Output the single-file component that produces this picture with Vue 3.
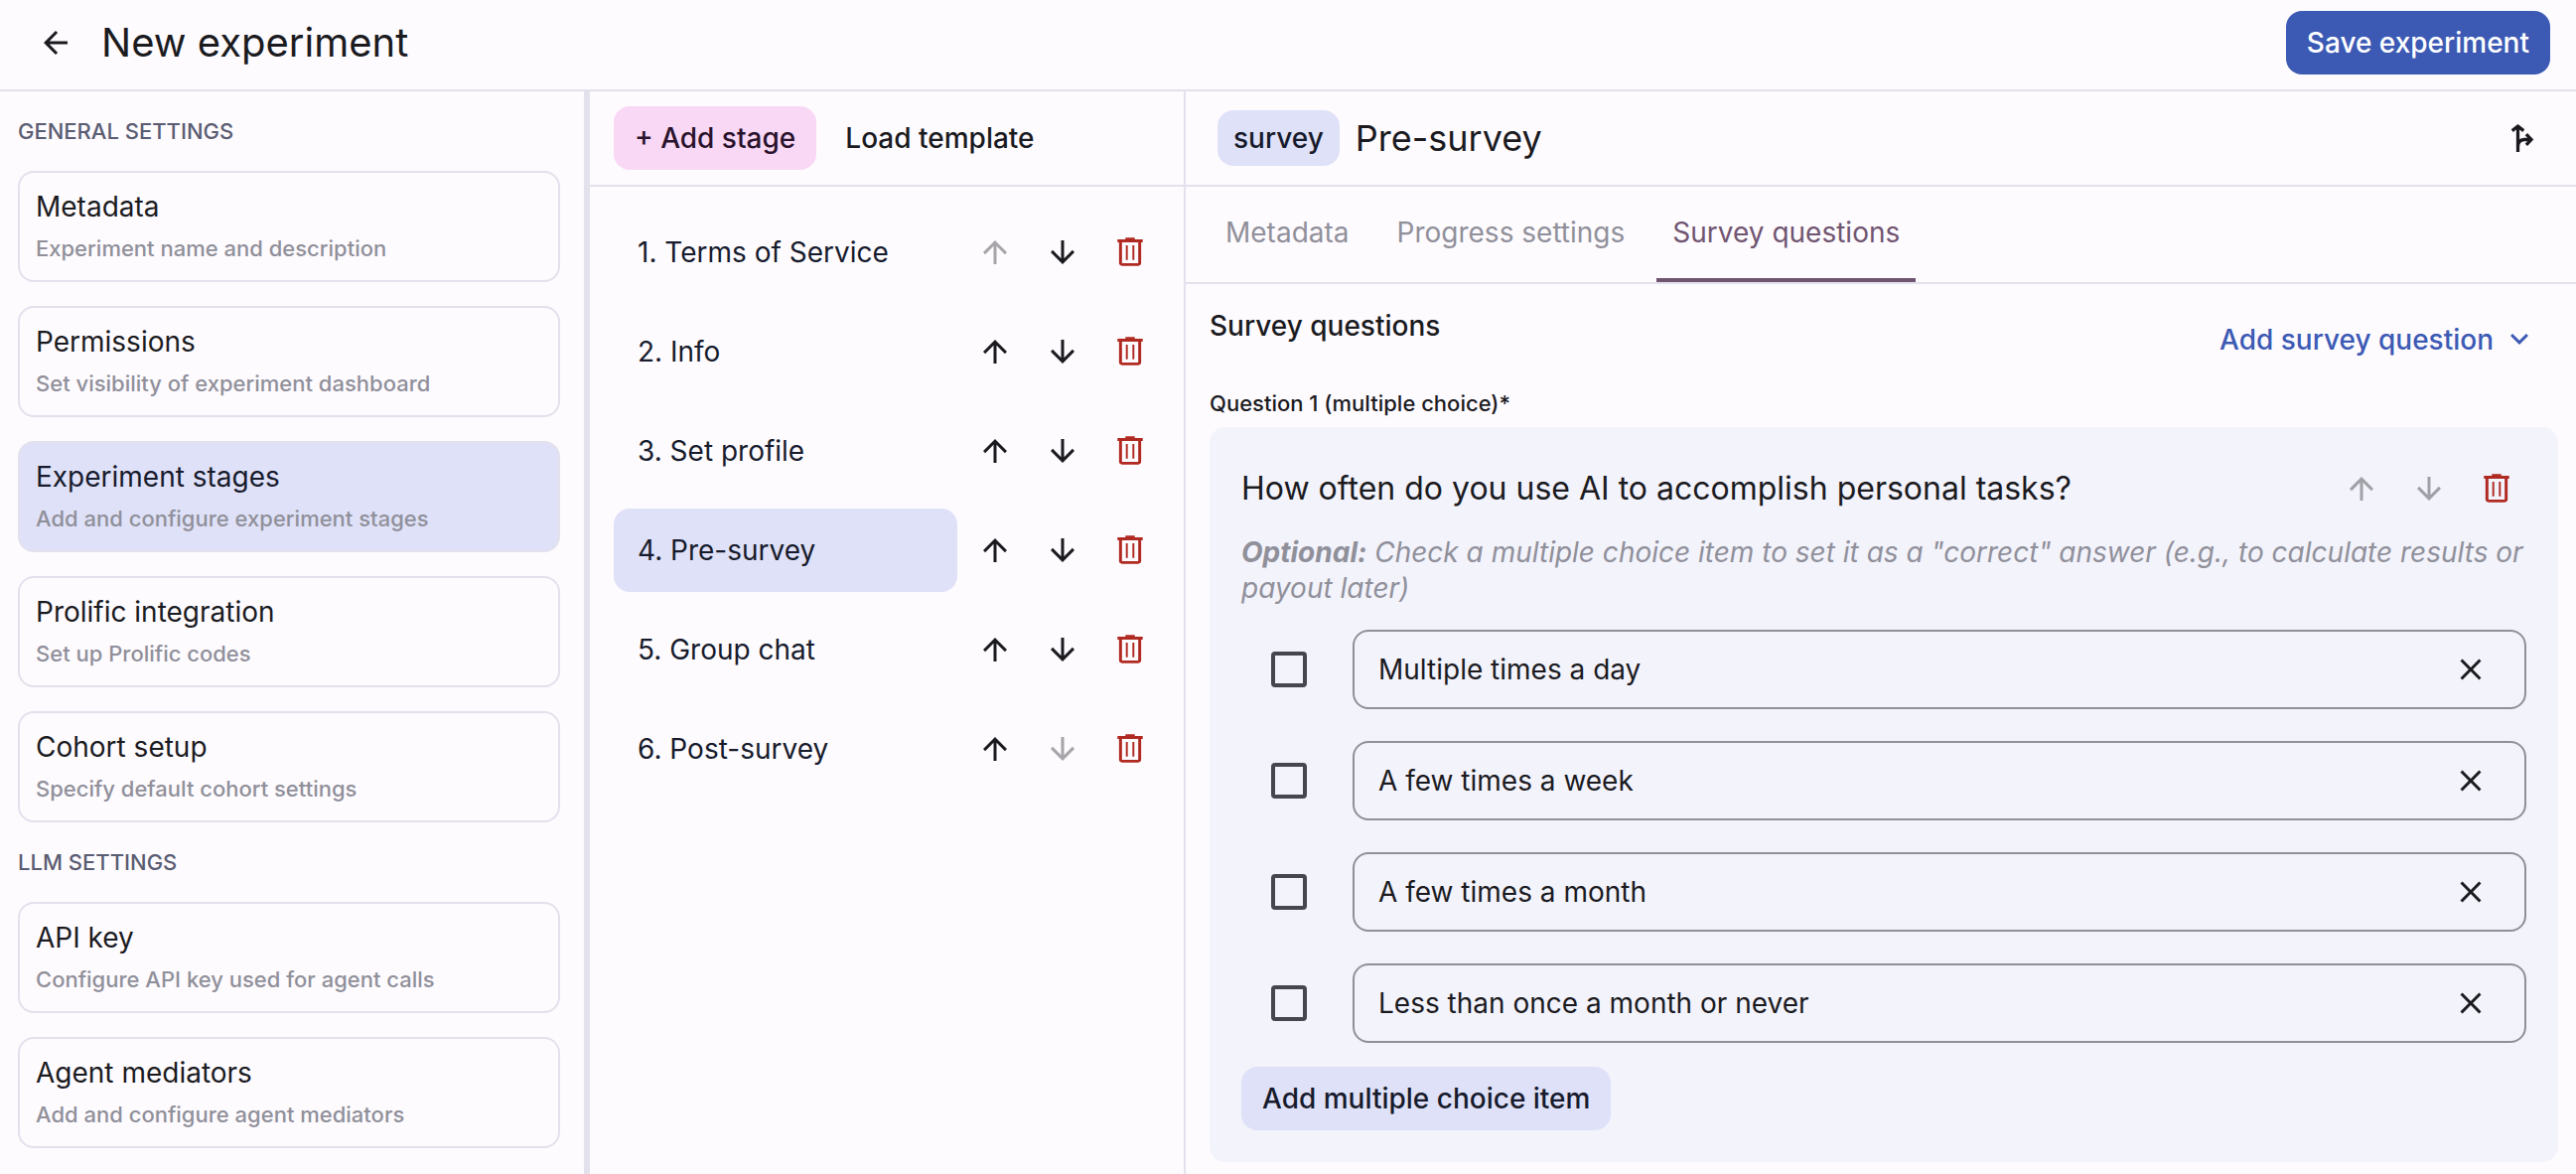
<script setup>
import { h, ref } from 'vue'

const icons = {
  back: 'm313-440 224 224-57 56-320-320 320-320 57 56-224 224h487v80H313Z',
  up: 'M440-160v-487L216-423l-56-57 320-320 320 320-56 57-224-224v487h-80Z',
  down: 'M440-800v487L216-537l-56 57 320 320 320-320-56-57-224 224v-487h-80Z',
  close: 'm256-200-56-56 224-224-224-224 56-56 224 224 224-224 56 56-224 224 224 224-56 56-224-224-224 224Z',
  chevron: 'M480-345 240-585l56-56 184 184 184-184 56 56-240 240Z',
  trash:
    'M260-115q-33 0-55-22t-22-55v-555h-42v-80h214v-45h250v45h214v80h-42v555q0 33-22 55t-55 22H260Zm438-632H262v560h436v-560ZM366-275h52v-390h-52v390Zm176 0h52v-390h-52v390Z',
}

// Icons drawn as lines rather than as filled shapes.
const lineIcons = {
  branch: 'M360-107V-780M206-676 360-800 514-676M360-250C360-370 430-440 550-440H720M584-586 720-440 584-294',
}

const Icon = (props) =>
  h('svg', { class: 'icon', viewBox: '0 -960 960 960', 'aria-hidden': 'true' }, [
    lineIcons[props.name]
      ? h('path', { d: lineIcons[props.name], fill: 'none', stroke: 'currentColor', 'stroke-width': 88 })
      : h('path', { d: icons[props.name], fill: 'currentColor' }),
  ])
Icon.props = ['name']

const navGroups = [
  {
    title: 'GENERAL SETTINGS',
    items: [
      { title: 'Metadata', text: 'Experiment name and description' },
      { title: 'Permissions', text: 'Set visibility of experiment dashboard' },
      { title: 'Experiment stages', text: 'Add and configure experiment stages' },
      { title: 'Prolific integration', text: 'Set up Prolific codes' },
      { title: 'Cohort setup', text: 'Specify default cohort settings' },
    ],
  },
  {
    title: 'LLM SETTINGS',
    items: [
      { title: 'API key', text: 'Configure API key used for agent calls' },
      { title: 'Agent mediators', text: 'Add and configure agent mediators' },
    ],
  },
]
const currentPanel = ref('Experiment stages')

const stages = ['Terms of Service', 'Info', 'Set profile', 'Pre-survey', 'Group chat', 'Post-survey']
const currentStage = ref(3)

const tabs = ['Metadata', 'Progress settings', 'Survey questions']
const currentTab = ref('Survey questions')

const question = ref('How often do you use AI to accomplish personal tasks?')
const options = ref([
  { text: 'Multiple times a day', correct: false },
  { text: 'A few times a week', correct: false },
  { text: 'A few times a month', correct: false },
  { text: 'Less than once a month or never', correct: false },
])
</script>

<template>
  <div class="app">
    <header class="topbar">
      <button class="icon-button" type="button" aria-label="Back"><Icon name="back" /></button>
      <h1>New experiment</h1>
      <button class="button primary" type="button">Save experiment</button>
    </header>

    <div class="body">
      <nav class="sidebar">
        <template v-for="group in navGroups" :key="group.title">
          <h2 class="group-title">{{ group.title }}</h2>
          <button
            v-for="item in group.items"
            :key="item.title"
            type="button"
            class="nav-card"
            :class="{ active: item.title === currentPanel }"
            @click="currentPanel = item.title"
          >
            <span class="nav-title">{{ item.title }}</span>
            <span class="nav-text">{{ item.text }}</span>
          </button>
        </template>
      </nav>

      <section class="stages">
        <div class="panel-header stages-header">
          <button class="button tertiary" type="button">+ Add stage</button>
          <button class="button plain" type="button">Load template</button>
        </div>
        <ol class="stage-list">
          <li v-for="(stage, i) in stages" :key="stage">
            <button
              type="button"
              class="stage"
              :class="{ active: i === currentStage }"
              @click="currentStage = i"
            >
              {{ i + 1 }}. {{ stage }}
            </button>
            <button class="icon-button" type="button" aria-label="Move stage up" :disabled="i === 0">
              <Icon name="up" />
            </button>
            <button
              class="icon-button"
              type="button"
              aria-label="Move stage down"
              :disabled="i === stages.length - 1"
            >
              <Icon name="down" />
            </button>
            <button class="icon-button danger" type="button" aria-label="Delete stage"><Icon name="trash" /></button>
          </li>
        </ol>
      </section>

      <main class="editor">
        <div class="panel-header editor-header">
          <span class="chip">survey</span>
          <h2>Pre-survey</h2>
          <button class="icon-button" type="button" aria-label="Fork"><Icon name="branch" /></button>
        </div>

        <div class="tabs" role="tablist">
          <button
            v-for="tab in tabs"
            :key="tab"
            type="button"
            role="tab"
            class="tab"
            :class="{ active: tab === currentTab }"
            :aria-selected="tab === currentTab"
            @click="currentTab = tab"
          >
            {{ tab }}
          </button>
        </div>

        <div class="content">
          <div class="section-header">
            <h3>Survey questions</h3>
            <button class="button link" type="button">Add survey question <Icon name="chevron" /></button>
          </div>

          <label class="question-label" for="question-1">Question 1 (multiple choice)*</label>
          <div class="question">
            <div class="question-header">
              <input id="question-1" v-model="question" class="question-input" type="text" />
              <button class="icon-button" type="button" aria-label="Move question up" disabled>
                <Icon name="up" />
              </button>
              <button class="icon-button" type="button" aria-label="Move question down" disabled>
                <Icon name="down" />
              </button>
              <button class="icon-button danger" type="button" aria-label="Delete question">
                <Icon name="trash" />
              </button>
            </div>
            <p class="hint">
              <b>Optional:</b> Check a multiple choice item to set it as a "correct" answer (e.g., to calculate
              results or payout later)
            </p>
            <div v-for="(option, i) in options" :key="i" class="option">
              <label class="check">
                <input v-model="option.correct" type="checkbox" :aria-label="'Mark as correct: ' + option.text" />
              </label>
              <div class="field">
                <input v-model="option.text" type="text" :aria-label="'Item ' + (i + 1)" />
                <button class="icon-button" type="button" aria-label="Remove item"><Icon name="close" /></button>
              </div>
            </div>
            <button class="button secondary" type="button">Add multiple choice item</button>
          </div>
        </div>
      </main>
    </div>
  </div>
</template>

<style>
body {
  margin: 0;
  background: #fefbff;
}
</style>

<style scoped>
.app {
  --text: #1b1b1f;
  --line: #e2e1ec;
  --outline: #90909a;
  --primary: #3c5ab4;
  --selected: #dfe1f8;
  --on-selected: #171b2c;
  display: flex;
  flex-direction: column;
  box-sizing: border-box;
  min-height: 100vh;
  background: #fefbff;
  color: var(--text);
  font: 400 28px/36px Inter, 'Open Sans', sans-serif;
}

h1,
h2,
h3,
p,
ol {
  margin: 0;
  padding: 0;
  font-weight: 400;
}

button,
input {
  margin: 0;
  padding: 0;
  border: 0;
  background: none;
  color: inherit;
  font: inherit;
}

button {
  cursor: pointer;
}

.button {
  display: flex;
  align-items: center;
  gap: 8px;
  height: 64px;
  padding: 0 21px;
  border-radius: 16px;
  font-weight: 500;
  white-space: nowrap;
}

.primary {
  background: var(--primary);
  color: #fff;
}

.secondary {
  background: var(--selected);
  color: var(--on-selected);
}

.tertiary {
  background: #f9d8f5;
  color: #2a132c;
}

.link {
  color: var(--primary);
}

.icon {
  display: block;
  flex: none;
  width: 36px;
  height: 36px;
}

.icon-button {
  display: flex;
  flex: none;
  align-items: center;
  justify-content: center;
  width: 60px;
  height: 60px;
  color: var(--text);
}

.icon-button:disabled {
  opacity: 0.38;
  cursor: default;
}

.danger {
  color: #b02a22;
}

.topbar {
  display: flex;
  align-items: center;
  gap: 16px;
  height: 86px;
  padding: 0 26px 4px;
  border-bottom: 2px solid var(--line);
}

.topbar h1 {
  flex: 1;
  font-size: 40px;
  line-height: 48px;
}

.body {
  display: grid;
  flex: 1;
  grid-template-columns: 594px 600px minmax(0, 1fr);
}

.sidebar {
  display: flex;
  flex-direction: column;
  gap: 24px;
  padding: 24px 24px 24px 18px;
  border-right: 6px solid var(--line);
}

.group-title {
  color: #5a5d72;
  font-size: 22px;
  font-weight: 500;
  line-height: 32px;
}

.nav-card {
  display: flex;
  flex-direction: column;
  gap: 8px;
  padding: 16px;
  border: 2px solid var(--line);
  border-radius: 16px;
  text-align: left;
}

.nav-card.active {
  background: var(--selected);
  color: var(--on-selected);
}

.nav-text {
  color: var(--outline);
  font-size: 22px;
  font-weight: 500;
  line-height: 32px;
}

.stages {
  border-right: 2px solid var(--line);
}

.panel-header {
  display: flex;
  align-items: center;
  height: 94px;
  border-bottom: 2px solid var(--line);
}

.stages-header {
  gap: 8px;
  padding: 0 24px;
}

.stage-list {
  display: flex;
  flex-direction: column;
  gap: 16px;
  padding: 24px;
  list-style: none;
}

.stage-list li {
  display: flex;
  align-items: center;
  gap: 8px;
}

.stage {
  flex: 1;
  padding: 24px;
  border-radius: 16px;
  color: var(--on-selected);
  text-align: left;
}

.stage.active {
  background: var(--selected);
}

.editor-header {
  gap: 16px;
  padding: 0 24px 0 32px;
}

.editor-header h2 {
  flex: 1;
  font-size: 36px;
  line-height: 44px;
}

.chip {
  padding: 10px 16px;
  border-radius: 16px;
  background: var(--selected);
  color: var(--on-selected);
  font-weight: 500;
}

.tabs {
  display: flex;
  gap: 16px;
  padding: 0 24px;
  border-bottom: 2px solid var(--line);
}

.tab {
  height: 96px;
  padding: 0 16px;
  border-bottom: 4px solid transparent;
  color: var(--outline);
}

.tab.active {
  border-color: #705570;
  color: #705570;
}

.content {
  padding: 24px 18px 12px 24px;
}

.section-header {
  display: flex;
  align-items: flex-start;
  justify-content: space-between;
}

.section-header h3 {
  font-size: 28px;
  font-weight: 500;
}

.question-label {
  display: block;
  margin: 16px 0 8px;
  font-size: 22px;
  font-weight: 500;
  line-height: 32px;
}

.question {
  display: flex;
  flex-direction: column;
  align-items: flex-start;
  gap: 16px;
  padding: 32px;
  border-radius: 16px;
  background: #f3f3fc;
}

.question-header {
  display: flex;
  align-items: center;
  align-self: stretch;
  gap: 8px;
}

.question-input {
  flex: 1;
  min-width: 0;
  font-size: 32px;
  line-height: 40px;
}

.hint {
  color: var(--outline);
  font-style: italic;
}

.option {
  display: flex;
  align-items: center;
  align-self: stretch;
  gap: 16px;
}

.check {
  display: flex;
  flex: none;
  align-items: center;
  justify-content: center;
  width: 96px;
  height: 96px;
}

.check input {
  width: 36px;
  height: 36px;
  border: 4px solid #46464f;
  border-radius: 4px;
  appearance: none;
}

.check input:checked {
  background: #46464f;
}

.field {
  display: flex;
  flex: 1;
  align-items: center;
  gap: 8px;
  box-sizing: border-box;
  height: 80px;
  padding: 0 24px;
  border: 2px solid var(--outline);
  border-radius: 16px;
}

.field input {
  flex: 1;
  min-width: 0;
}
</style>
